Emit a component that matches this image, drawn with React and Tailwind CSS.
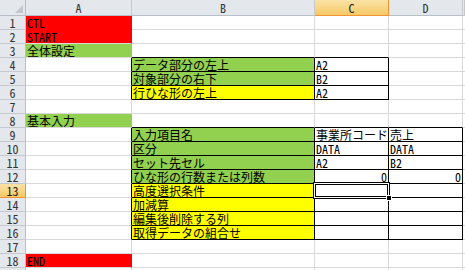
import React from 'react';

const RED = 'bg-[#ff0000]';
const GREEN = 'bg-[#92d050]';
const YELLOW = 'bg-[#ffff00]';

// sheet content, one object per row: column -> { t, bg, right }
const rows = [
  { A: { t: 'CTL', bg: RED } },
  { A: { t: 'START', bg: RED } },
  { A: { t: '全体設定', bg: GREEN } },
  { B: { t: 'データ部分の左上', bg: GREEN }, C: { t: 'A2' } },
  { B: { t: '対象部分の右下', bg: GREEN }, C: { t: 'B2' } },
  { B: { t: '行ひな形の左上', bg: YELLOW }, C: { t: 'A2' } },
  {},
  { A: { t: '基本入力', bg: GREEN } },
  { B: { t: '入力項目名', bg: GREEN }, C: { t: '事業所コード' }, D: { t: '売上' } },
  { B: { t: '区分', bg: GREEN }, C: { t: 'DATA' }, D: { t: 'DATA' } },
  { B: { t: 'セット先セル', bg: GREEN }, C: { t: 'A2' }, D: { t: 'B2' } },
  { B: { t: 'ひな形の行数または列数', bg: GREEN }, C: { t: '0', right: true }, D: { t: '0', right: true } },
  { B: { t: '高度選択条件', bg: YELLOW } },
  { B: { t: '加減算', bg: YELLOW } },
  { B: { t: '編集後削除する列', bg: YELLOW } },
  { B: { t: '取得データの組合せ', bg: YELLOW } },
  {},
  { A: { t: 'END', bg: RED } },
  {},
];

const widths = { A: 'w-[106px]', B: 'w-[183px]', C: 'w-[74px]', D: 'w-[74px]', E: 'flex-1' };
const cols = ['A', 'B', 'C', 'D', 'E'];

// which cells have a black line on their right / bottom edge (1-based row)
const boxed = (r) => (r >= 4 && r <= 6) || (r >= 9 && r <= 16);
function blackRight(r, c) {
  if (c === 'A' || c === 'B' || c === 'C') return boxed(r);
  if (c === 'D') return r >= 9 && r <= 16;
  return false;
}
function blackBottom(r, c) {
  if (c === 'B' || c === 'C') return r === 3 || r === 8 || boxed(r);
  if (c === 'D') return r === 8 || (r >= 9 && r <= 16);
  return false;
}

const Cell = ({ r, c }) => {
  const d = rows[r - 1][c] || {};
  const bg = d.bg || 'bg-white';
  const br = blackRight(r, c)
    ? 'border-r-black'
    : d.bg === RED ? 'border-r-[#ff0000]' : d.bg === GREEN ? 'border-r-[#92d050]' : 'border-r-[#d9d9d9]';
  const bb = blackBottom(r, c)
    ? 'border-b-black'
    : d.bg === RED && rows[r] && rows[r].A && rows[r].A.bg === RED ? 'border-b-[#ff0000]' : 'border-b-[#d9d9d9]';
  return (
    <div
      className={`${widths[c]} h-[14px] shrink-0 border-r border-b ${br} ${bb} ${bg} flex items-end px-[1px] whitespace-nowrap text-[12px] leading-[13px] text-black ${d.right ? 'justify-end' : 'justify-start'}`}
    >
      {d.t}
    </div>
  );
};

const Header = ({ label, w, active }) => (
  <div
    className={`${w} h-[16px] shrink-0 border-r border-b flex items-center justify-center text-[12px] leading-[14px] ${
      active
        ? 'bg-gradient-to-b from-[#fbe3a6] to-[#f5c964] border-r-[#f29436] border-b-[#f29436] text-[#222]'
        : 'bg-[#e4e7eb] border-r-[#c5cad1] border-b-[#b9bfc7] text-[#333]'
    }`}
  >
    {label}
  </div>
);

const RowHead = ({ n }) => (
  <div
    className={`w-[26px] h-[14px] shrink-0 border-r border-b flex items-center justify-center text-[12px] leading-[13px] ${
      n === 13
        ? 'bg-gradient-to-b from-[#fbe3a6] to-[#f5c964] border-r-[#f29436] border-b-[#f29436] text-[#222]'
        : 'bg-[#e4e7eb] border-r-[#b9bfc7] border-b-[#c5cad1] text-[#333]'
    }`}
  >
    {n}
  </div>
);

export default function App() {
  return (
    <div className="relative w-[465px] h-[270px] overflow-hidden bg-white [font-family:'Noto_Sans_Mono_CJK_JP','Noto_Sans_CJK_JP',sans-serif]">
      <div className="flex">
        <div className="w-[26px] h-[16px] shrink-0 bg-[#e4e7eb] border-r border-b border-r-[#b9bfc7] border-b-[#b9bfc7] flex items-end justify-end p-[2px]">
          <svg width="8" height="8" viewBox="0 0 8 8">
            <polygon points="8,0 8,8 0,8" fill="#c3c8cf" />
          </svg>
        </div>
        <Header label="A" w="w-[106px]" />
        <Header label="B" w="w-[183px]" />
        <Header label="C" w="w-[74px]" active />
        <Header label="D" w="w-[74px]" />
        <Header label="" w="flex-1" />
      </div>
      {rows.map((_, i) => (
        <div key={i} className="flex">
          <RowHead n={i + 1} />
          {cols.map((c) => (
            <Cell key={c} r={i + 1} c={c} />
          ))}
        </div>
      ))}

      {/* active cell frame on C13 */}
      <div className="absolute left-[313px] top-[182px] w-[77px] h-[17px] border border-black">
        <div className="w-full h-full border border-white">
          <div className="w-full h-full border border-black" />
        </div>
      </div>
      <div className="absolute left-[386px] top-[195px] w-[6px] h-[6px] bg-black border border-white" />
    </div>
  );
}
